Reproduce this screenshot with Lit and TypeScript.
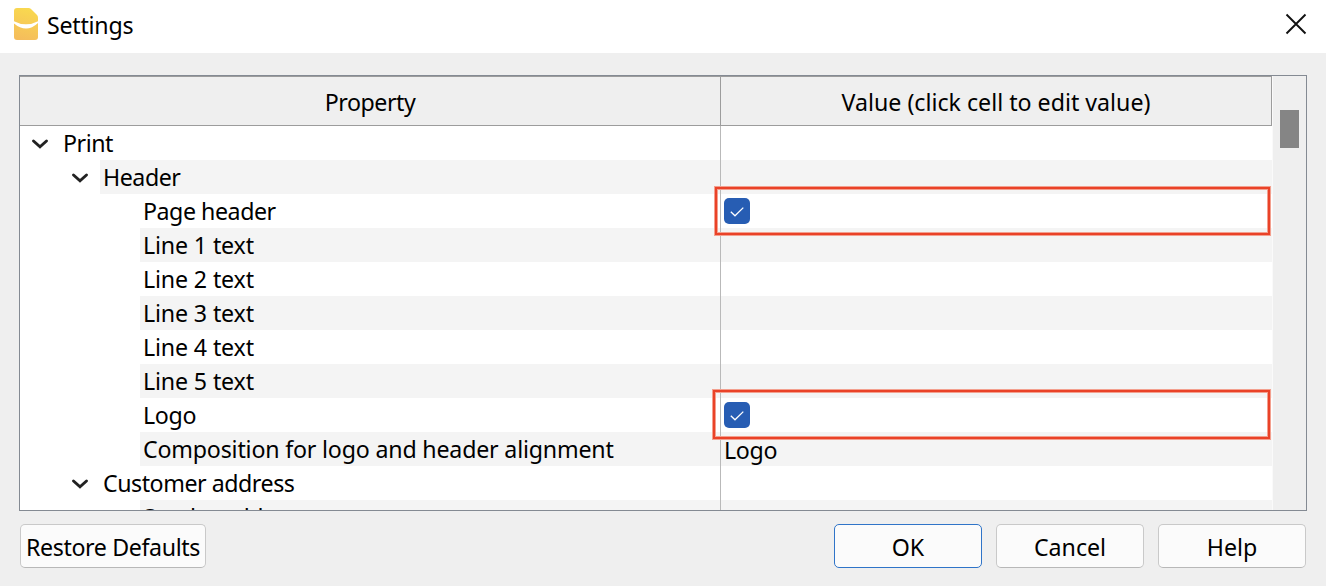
import { LitElement, html, css, nothing } from "lit";
import { customElement, property } from "lit/decorators.js";
import { classMap } from "lit/directives/class-map.js";

interface Row {
  label: string;
  level: number;
  fit: string;
  branch?: boolean;
  checked?: boolean;
  value?: string;
}

const ROWS: Row[] = [
  { label: "Print", level: 0, fit: "tight", branch: true },
  { label: "Header", level: 1, fit: "tight", branch: true },
  { label: "Page header", level: 2, fit: "tight", checked: true },
  { label: "Line 1 text", level: 2, fit: "loose" },
  { label: "Line 2 text", level: 2, fit: "loose" },
  { label: "Line 3 text", level: 2, fit: "loose" },
  { label: "Line 4 text", level: 2, fit: "loose" },
  { label: "Line 5 text", level: 2, fit: "loose" },
  { label: "Logo", level: 2, fit: "medium", checked: true },
  { label: "Composition for logo and header alignment", level: 2, fit: "long", value: "Logo" },
  { label: "Customer address", level: 1, fit: "tight", branch: true },
  { label: "Sender address", level: 2, fit: "tight" },
];

@customElement("settings-row")
class SettingsRow extends LitElement {
  @property({ attribute: false }) row!: Row;
  @property({ type: Boolean }) alt = false;

  static styles = css`
    :host { display: block; }
    .row { display: flex; height: 34px; }
    .name { width: 700px; display: flex; box-sizing: border-box; flex: none; }
    .gutter { flex: none; display: flex; justify-content: flex-end; }
    .l0 { width: 40px; }
    .l1 { width: 80px; }
    .l2 { width: 120px; }
    .arrow { width: 40px; height: 34px; display: block; }
    .label { flex: 1; padding-left: 3px; line-height: 34px; white-space: pre; }
    .value { width: 552px; height: 34px; border-left: 1px solid #b9b9b9; padding-left: 3px; box-sizing: border-box; flex: none; line-height: 36px; letter-spacing: -0.3px; }
    .alt .label, .alt .value { background: #f4f4f4; }
    .box { display: block; margin-top: 4px; }
    .tight { letter-spacing: -0.46px; }
    .medium { letter-spacing: -0.3px; }
    .long { letter-spacing: -0.19px; }
    .loose { letter-spacing: -0.14px; }
  `;

  render() {
    const r = this.row;
    return html`<div class=${classMap({ row: true, alt: this.alt })}>
      <div class="name">
        <div class="gutter l${r.level}">
          ${r.branch
            ? html`<svg class="arrow" viewBox="0 0 40 34">
                <path d="M13.5 15 L20 20.8 L26.5 15" fill="none" stroke="#222" stroke-width="2.9" stroke-linecap="round" stroke-linejoin="miter" />
              </svg>`
            : nothing}
        </div>
        <div class="label"><span class=${r.fit}>${r.label}</span></div>
      </div>
      <div class="value">${r.checked
        ? html`<svg class="box" width="26" height="26" viewBox="0 0 26 26">
            <rect width="26" height="26" rx="5" fill="#275db3" />
            <path d="M6.8 13.7 L11 17.8 L19.3 9.6" fill="none" stroke="#fff" stroke-width="1.3" />
          </svg>`
        : r.value ?? nothing}</div>
    </div>`;
  }
}

@customElement("app-root")
class AppRoot extends LitElement {
  static styles = css`
    :host {
      display: block; position: relative; width: 1326px; height: 586px; overflow: hidden;
      background: #efefef; color: #000;
      font: 23.2px "Noto Sans", "Open Sans", sans-serif;
    }
    .title { height: 53px; background: #fff; display: flex; align-items: center; box-sizing: border-box; padding: 0 19px 0 14px; }
    .logo { display: block; margin-top: -5px; }
    .caption { flex: 1; padding-left: 9px; line-height: 50px; height: 53px; letter-spacing: -0.24px; }
    .close { display: block; margin-top: -5px; }
    .tree { margin: 22px 19px 0; height: 436px; box-sizing: border-box; border: 1px solid #848a93; display: flex; overflow: hidden; }
    .grid { width: 1252px; background: #fff; flex: none; }
    .head { display: flex; width: 1252px; height: 50px; box-sizing: border-box; border: 1px solid #9c9c9c; border-left: 0; background: #efefef; text-align: center; line-height: 51px; }
    .h1 { width: 700px; flex: none; letter-spacing: -0.47px; }
    .h2 { flex: 1; border-left: 1px solid #9c9c9c; }
    .scroll { flex: 1; border-left: 1px solid #fafafa; background: #efefef; }
    .thumb { width: 19px; height: 38px; margin: 34px 0 0 7px; background: #858585; }
    .foot { display: flex; padding: 13px 20px 0; gap: 14px; }
    .btn { box-sizing: border-box; width: 148px; height: 44px; border: 1px solid #c9c9c9; border-bottom-color: #b8b8b8; border-radius: 5px; background: #fbfbfb; text-align: center; line-height: 44px; white-space: nowrap; }
    .wide { width: 186px; margin-right: auto; letter-spacing: -0.36px; }
    .ok { border-color: #2f74c8; }
    .mark { position: absolute; box-sizing: border-box; border: 2px solid #ea4228; box-shadow: 0 0 0 1px #f3a08f, inset 0 0 0 1px #f3a08f; pointer-events: none; }
    .m1 { left: 715px; top: 187px; width: 555px; height: 48px; }
    .m2 { left: 713px; top: 390px; width: 557px; height: 49px; }
  `;

  render() {
    return html`
      <div class="title">
        <svg class="logo" width="24" height="32" viewBox="0 0 24 32">
          <defs><linearGradient id="g" x1="0.6" y1="0" x2="0.4" y2="1">
            <stop offset="0" stop-color="#f9d94f" /><stop offset="1" stop-color="#f5bd5c" />
          </linearGradient></defs>
          <path d="M3 0 H14.5 Q16 0 17 1 L23 7 Q24 8 24 9.5 V29 Q24 32 21 32 H3 Q0 32 0 29 V3 Q0 0 3 0Z" fill="url(#g)" />
          <path d="M0 13.2 Q12 19.5 24 13.2 V15 Q18 20.6 12 20.6 Q6 20.6 0 15.5Z" fill="#fff" />
        </svg>
        <div class="caption">Settings</div>
        <svg class="close" width="22" height="22" viewBox="0 0 22 22">
          <path d="M1.5 1.5 L20.5 20.5 M20.5 1.5 L1.5 20.5" stroke="#111" stroke-width="1.9" />
        </svg>
      </div>
      <div class="tree">
        <div class="grid">
          <div class="head"><div class="h1">Property</div><div class="h2">Value (click cell to edit value)</div></div>
          ${ROWS.map((r, i) => html`<settings-row .row=${r} .alt=${i % 2 === 1}></settings-row>`)}
        </div>
        <div class="scroll"><div class="thumb"></div></div>
      </div>
      <div class="foot">
        <div class="btn wide">Restore Defaults</div>
        <div class="btn ok">OK</div>
        <div class="btn">Cancel</div>
        <div class="btn">Help</div>
      </div>
      <div class="mark m1"></div>
      <div class="mark m2"></div>
    `;
  }
}
